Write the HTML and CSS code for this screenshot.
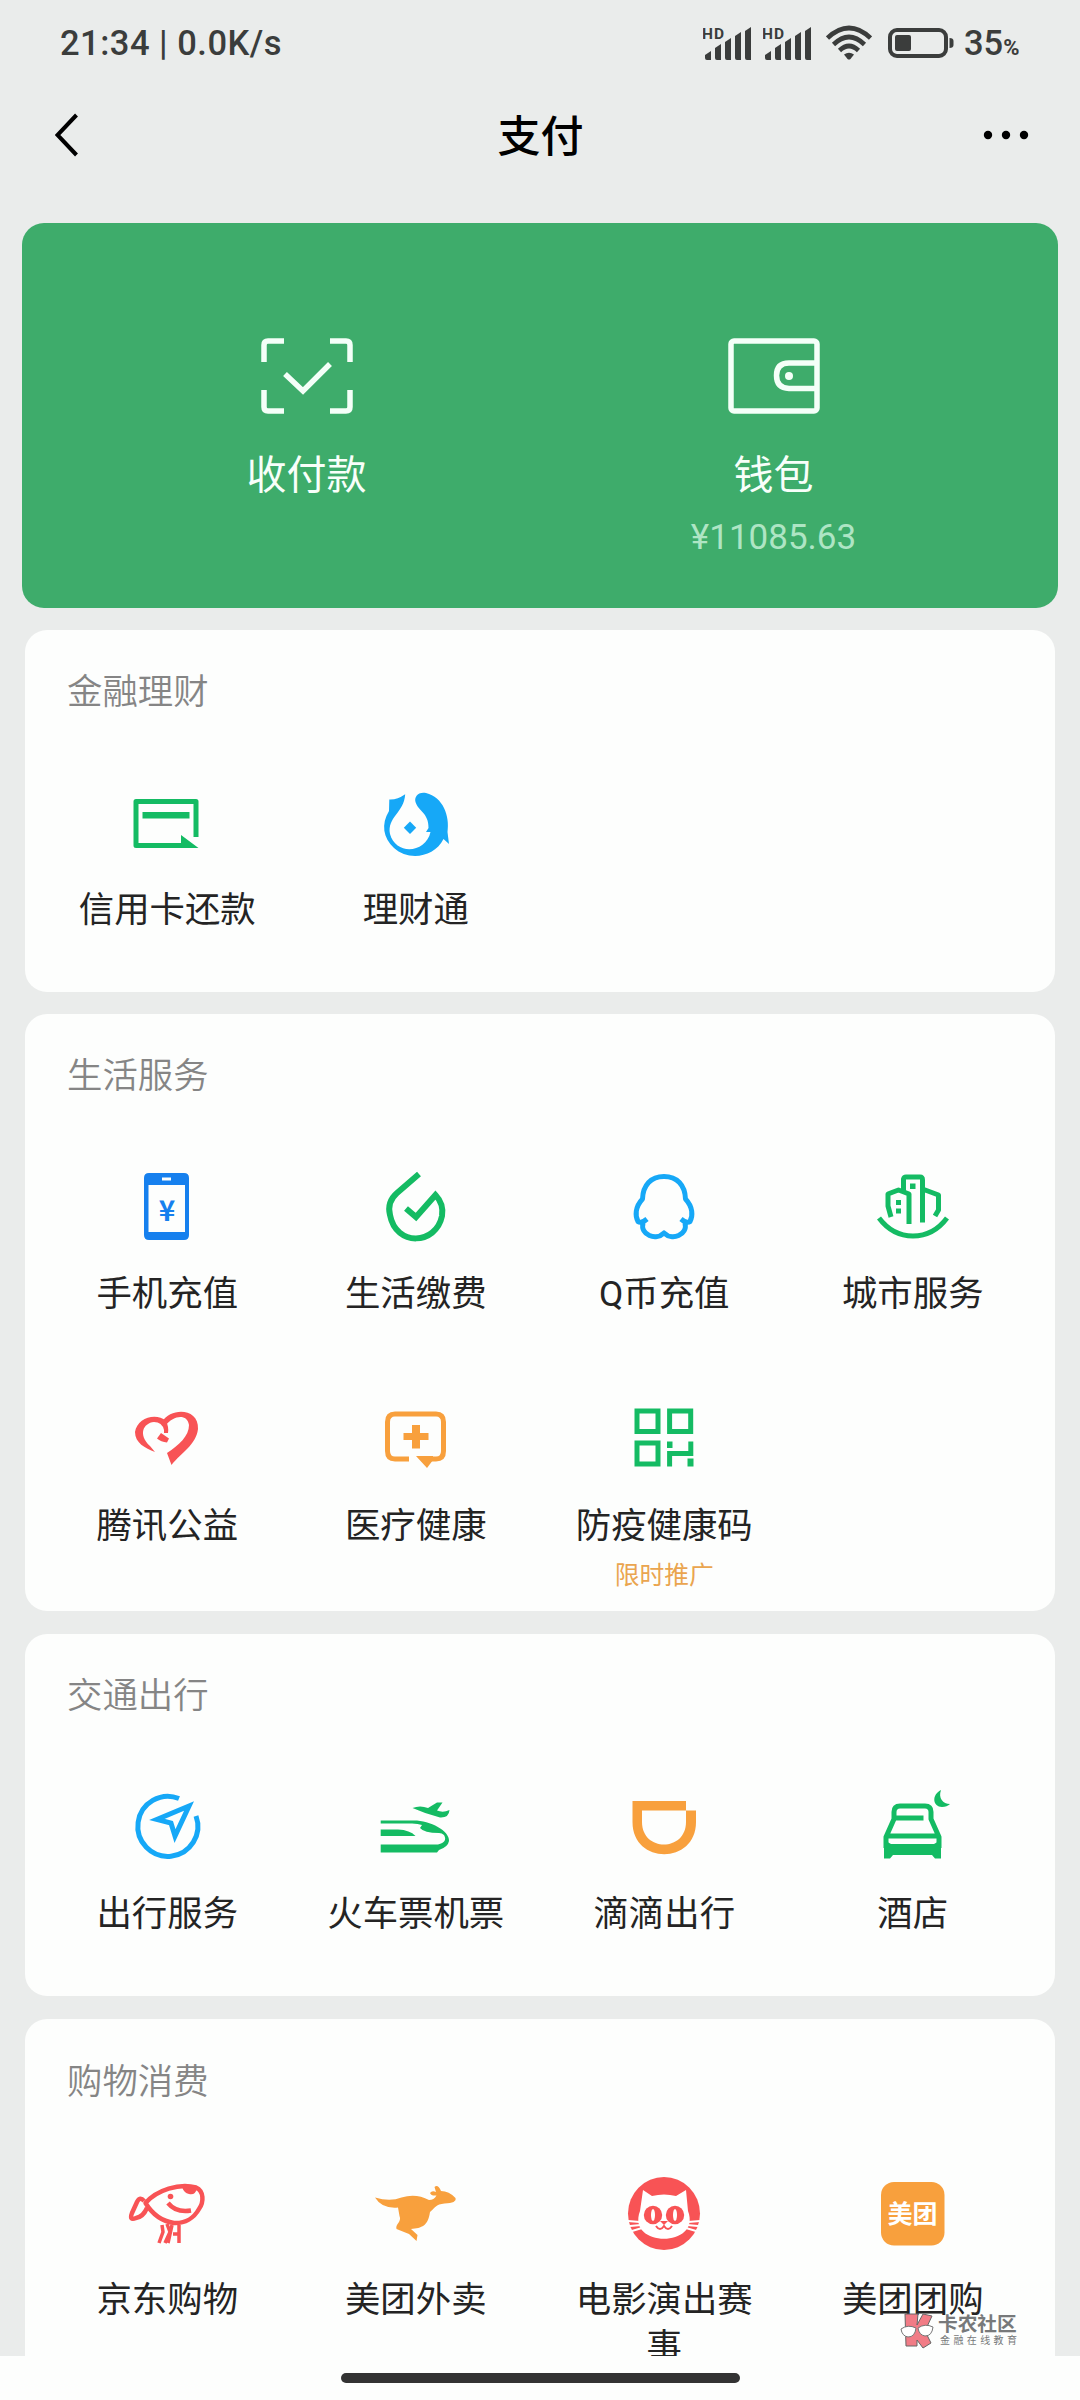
FILE: index.html
```html
<!DOCTYPE html>
<html lang="zh-CN">
<head>
<meta charset="utf-8">
<title>支付</title>
<link rel="stylesheet" href="styles.css">
</head>
<body>
<div class="screen">
  <header class="status">
    <span class="clock">21:34 | 0.0K/s</span>
    <div class="status-right">
      <svg class="signal" width="50" height="36" viewBox="0 0 50 36"><text x="-1" y="13.5" class="hd">HD</text><path d="M2 33v-3l6-4v9H4q-2 0-2-2zM12 23l6-4v16h-4q-2 0-2-2zM22 17l6-4v22h-4q-2 0-2-2zM32 11l6-4v28h-4q-2 0-2-2zM42 6l6-4v33h-4q-2 0-2-2z"/></svg>
      <svg class="signal" width="50" height="36" viewBox="0 0 50 36"><text x="-1" y="13.5" class="hd">HD</text><path d="M2 33v-3l6-4v9H4q-2 0-2-2zM12 23l6-4v16h-4q-2 0-2-2zM22 17l6-4v22h-4q-2 0-2-2zM32 11l6-4v28h-4q-2 0-2-2zM42 6l6-4v33h-4q-2 0-2-2z"/></svg>
      <svg class="wifi" width="46" height="36" viewBox="0 0 46 36"><g fill="none" stroke="#3b3d3c" stroke-width="4.6"><path d="M1.5 13Q23-7 44.500 13"/><path d="M7.500 19.500Q23 4.500 38.500 19.500"/><path d="M13.500 25.500Q23 16.500 32.500 25.500"/></g><path d="M18 29.500Q23 26 28 29.500L24.500 34Q23 35 21.500 34z"/></svg>
      <svg class="battery" width="67" height="30" viewBox="0 0 67 30"><rect x="2" y="2" width="56" height="26" rx="7" fill="none" stroke="#3b3d3c" stroke-width="4"/><rect x="7" y="7" width="16" height="16" rx="2"/><path d="M61.500 10q4 0 4 3v4q0 3-4 3z"/></svg>
      <span class="percent">35<small>%</small></span>
    </div>
  </header>

  <nav class="nav">
    <svg width="24" height="44" viewBox="0 0 24 44"><path d="M21.500 2L2.500 22L21.500 42" fill="none" stroke="#000" stroke-width="4"/></svg>
    <h1>支付</h1>
    <svg width="48" height="12" viewBox="0 0 48 12"><circle cx="6" cy="6" r="4.200"/><circle cx="24" cy="6" r="4.200"/><circle cx="42" cy="6" r="4.200"/></svg>
  </nav>

  <main class="content">
    <section class="wallet">
      <div class="pay">
        <svg width="92" height="76" viewBox="-46 -38 92 76"><g fill="none" stroke="#f4fff8" stroke-width="5.500"><path d="M-43-14V-31Q-43-35-39-35H-23M23-35H39Q43-35 43-31V-14M43 14V31Q43 35 39 35H23M-23 35H-39Q-43 35-43 31V14"/><path d="M-22-2L-4 15L23-12"/></g></svg>
        <span>收付款</span>
      </div>
      <div class="pay">
        <svg width="92" height="76" viewBox="-46 -38 92 76"><g fill="none" stroke="#f4fff8" stroke-width="5.500"><rect x="-43" y="-35" width="86" height="70" rx="3"/><path d="M43-13H15Q2.500-13 2.500-.5T15 12.500H43"/></g><circle cx="15" cy="0" r="4" fill="#f4fff8"/></svg>
        <span>钱包</span>
        <b>¥11085.63</b>
      </div>
    </section>

    <section class="card finance">
      <h2>金融理财</h2>
      <div class="grid">
        <div class="item">
          <svg class="icon green" viewBox="-40 -40 80 80"><path class="line" d="M29 13V-22.500H-31V21.500H16"/><path d="M-24.500-12H22.500V-5.500H-24.500zM14 11L31.500 24H14z"/></svg>
          <span>信用卡还款</span>
        </div>
        <div class="item">
          <svg class="icon sky" viewBox="-40 -40 80 80"><path d="M-10.800-29.700Q-19-24-26.700-24.500L-27-13C-35 0-33 14-22 24C-8 37 18 34 27.500 15L33 20L31.500 8C34-8 27-27 10-31C2-32.500-2-27-.5-22C2-13 13-11 12.500 4L10 8H14.500C10 29-20 32-26 10C-29-7-12-11-10.800-29.700z"/><path d="M-6-2.500L.2 3.700L-6 10L-12.200 3.700z"/></svg>
          <span>理财通</span>
        </div>
      </div>
    </section>

    <section class="card life">
      <h2>生活服务</h2>
      <div class="grid">
        <div class="item">
          <svg class="icon blue" viewBox="-40 -40 80 80"><path fill-rule="evenodd" d="M-18-35H17Q22-35 22-30V27Q22 32 17 32H-18Q-23 32-23 27V-30Q-23-35-18-35zM-18.500-23V24H18V-23zM-5-30.500V-27.500H4V-30.500z"/><text x="0" y="12.500" class="yen">¥</text></svg>
          <span>手机充值</span>
        </div>
        <div class="item">
          <svg class="icon green" viewBox="-40 -40 80 80"><path class="line thick" d="M3-34L-19-15C-27-8-28-1-26 7C-20 39 20 37 26 8Q28-4 19.500-13L0 9L-10 .5"/></svg>
          <span>生活缴费</span>
        </div>
        <div class="item">
          <svg class="icon sky" viewBox="-40 -40 80 80"><path class="line" d="M0-31.500C-13-31.500-21-23-21.500-9C-29-1-29 8-26 13.500Q-23 16-17 11M17 11Q23 16 26 13.500C29 8 29-1 21.500-9C21-23 13-31.500 0-31.500M-21 15C-24 27-8 33 0 25C8 33 24 27 21 15"/></svg>
          <span>Q币充值</span>
        </div>
        <div class="item">
          <svg class="icon green" viewBox="-40 -40 80 80"><path class="line" d="M-22 9L-25-2V-14Q-20-16-14.500-18Q-9-16-4-14V16M-9.500-17V-29Q-9-31-7-31H7Q9.500-31 9.500-28V14.500M9.500-19L25.500-13V2L22 8M-34 10C-16 34 16 34 34 10"/><path d="M-3-24.500H2.500V-19H-3zM-17-8H-12V-3H-17zM-17 .5H-12V5.500H-17z"/></svg>
          <span>城市服务</span>
        </div>
        <div class="item">
          <svg class="icon red" viewBox="-40 -40 80 80"><path d="M-5-18C4-33 32-32 31-11C29 5 14 13 4.500 25L0 13C12 5 22-4 22-15C20-27 6-24-1-15z"/><path d="M-1-19C-11-28-30-22-32-8C-32 3-22 8-12 12L-17 6C-29-5-24-17-13-18Q-5-18-3-10V-7H1Q2-13-1-19z"/><path d="M-6-7L2-1.500L0 2.500Q-6 2-10-1.500z"/></svg>
          <span>腾讯公益</span>
        </div>
        <div class="item">
          <svg class="icon orange" viewBox="-40 -40 80 80"><path class="line" d="M-7 19H-21Q-28.500 19-28.500 11V-18Q-28.500-26-21-26H20Q27.500-26 27.500-18V11Q27.500 19 20 19H13"/><path d="M0 16H17V20L11 28zM-12.500-7H-4V-15H4V-7H12.500V0H4V8.500H-4V0H-12.500z"/></svg>
          <span>医疗健康</span>
        </div>
        <div class="item">
          <svg class="icon green" viewBox="-40 -40 80 80"><path class="line square" d="M-27-29H-6V-8.500H-27zM5.600-29H26.700V-8.500H5.600zM-27 3H-6V24H-27zM26.800 1.500V13.500H5.600V26.500"/><path d="M3 1.500H8.500V8H3zM23.500 18.500H29.500V26.500H23.500z"/></svg>
          <span>防疫健康码</span>
          <em>限时推广</em>
        </div>
      </div>
    </section>

    <section class="card">
      <h2>交通出行</h2>
      <div class="grid">
        <div class="item">
          <svg class="icon sky" viewBox="-40 -40 80 80"><path class="line" d="M12-29.500A30 30 0 1 0 29-12"/><path class="line sharp" d="M22-22L-10-8.500L4-5L8 8z"/></svg>
          <span>出行服务</span>
        </div>
        <div class="item">
          <svg class="icon green" viewBox="-40 -40 80 80"><path d="M-35.300-7.500H-2C14-7.500 34 3 33 13Q32 19 23 22L21 24.500H-35.300V16.500H22Q32 14 28 7Q26 5 23 5Q8 5 4 0L6-3Q2-4.500-4-4.500H-35.300z"/><path d="M-35.300 1.500H-18Q-6 2-.5 8H-35.300z"/><path d="M-3.500-20Q4-23 12-20L21-25.500H26.500L21-17.500Q27-15 33.500-18Q33-10 24-10.500Q10-14-3.500-20z"/></svg>
          <span>火车票机票</span>
        </div>
        <div class="item">
          <svg class="icon orange" viewBox="-40 -40 80 80"><path fill-rule="evenodd" d="M-31.500-27H22V-17.500H32V-6C32 37-31.500 37-31.500-6zM-22-17.500V-6C-22 24 22 24 22-6V-17.500z"/></svg>
          <span>滴滴出行</span>
        </div>
        <div class="item">
          <svg class="icon green" viewBox="-40 -40 80 80"><path class="line" d="M-27 20V9L-19-9V-16Q-19-22-13-22H12Q18-22 18-16V-9L26 9V20M-17-10H10.500M-25 8H24"/><path d="M-29 12L-22 16H21L28 12V30.500H22L19 27H-20L-23 30.500H-29zM28-38C18-33 20-21 29-21Q34-21 37-24C30-24 25-30 28-38z"/></svg>
          <span>酒店</span>
        </div>
      </div>
    </section>

    <section class="card last">
      <h2>购物消费</h2>
      <div class="grid">
        <div class="item">
          <svg class="icon red" viewBox="-40 -40 80 80"><path class="line snout" d="M-21.500-11C-10-24 12-31 29-26.500C37-23 37-12 32-5C27 4 18 9.500 7 9C-7 7-16-2-21.500-11zM-23-13Q-27-18-30-12L-35-1Q-38 7-31 4Q-24 3-20-6M1-11Q9-1 24-3.500"/><path d="M15-27L31-27Q28-18 22-20Q17-21 15-27z"/><circle cx="3.500" cy="-17.500" r="2.800"/><path class="line thin" d="M-5 11L-4 18L-8 29M0 10L3 18L-2 29M5 11L1 29M12 11V29M6 20H12"/></svg>
          <span>京东购物</span>
        </div>
        <div class="item">
          <svg class="icon wide orange" viewBox="-44 -40 88 80"><path d="M-41-16.500Q-26-12-14.500-16.500Q0-21 13-14Q18-14 20.500-18.500Q15-18 14-21Q16-24 20-22L18.500-27Q22-30 25-23Q33-23 39.500-16Q41-11 28.500-10.500C20-10 18-5 14-2C12 12 6 14-5 15L1.500 21L.5 27L-7 20L-19.500 15C-21 10-14 8-16.500 2L-18-6.500Q-34-5-41-16.500z"/></svg>
          <span>美团外卖</span>
        </div>
        <div class="item">
          <svg class="icon red" viewBox="-40 -40 80 80"><ellipse cx="0" cy="-.5" rx="36" ry="36.500"/><path d="M-21-24L-12-18Q0-21 12-18L22-24L24-3C38 34-38 34-24-3z" fill="#fff"/><path d="M-36 7L-24 8M-34 12L-23 11M-32 17L-22 14M36 7L24 8M34 12L23 11M32 17L22 14" stroke="#fff" stroke-width="2"/><circle cx="-11" cy="1" r="9.200"/><circle cx="11" cy="1" r="9.200"/><path d="M-4 7H4L0 11z"/><path d="M-8 12Q-4 18 0 12Q4 18 8 12" fill="none" stroke="#f85355" stroke-width="2"/><ellipse cx="-11" cy="1" rx="2" ry="6" fill="#fff"/><ellipse cx="11" cy="1" rx="2" ry="6" fill="#fff"/></svg>
          <span>电影演出赛事</span>
        </div>
        <div class="item">
          <svg class="icon orange" viewBox="-40 -40 80 80"><rect x="-32" y="-32" width="63.500" height="63.500" rx="13"/><text x="-.5" y="9" class="brand">美团</text></svg>
          <span>美团团购</span>
        </div>
      </div>
    </section>
  </main>

  <footer class="home"><i></i></footer>

  <div class="mark">
    <svg width="34" height="38" viewBox="0 0 34 38"><path d="M5 2H18L17 13L23 2L32 4L25 19L31 31L23 36L17 28V34H6z" fill="#f17c86" stroke="#666" stroke-width="1"/><path d="M1 17Q8 12 16 16Q15 25 8 25Q2 24 1 17zM18 16Q25 11 33 15Q32 24 25 24Q19 23 18 16z" fill="#fff" stroke="#777" stroke-width="1"/></svg>
    <div><strong>卡农社区</strong><span>金融在线教育</span></div>
  </div>
</div>
</body>
</html>
```
FILE: styles.css
```css
* { box-sizing: border-box; margin: 0; padding: 0; }
body { background: #fdfefd; font-family: "Noto Sans CJK SC", sans-serif; }
svg { display: block; flex: none; }
.screen { position: relative; width: 1080px; height: 2400px; overflow: hidden; display: flex; flex-direction: column; background: #eaeceb; }

.status { height: 86px; padding: 0 60px; display: flex; justify-content: space-between; align-items: center; font-family: Roboto, "Noto Sans", sans-serif; font-weight: 500; color: #3b3d3c; fill: #3b3d3c; }
.clock { font-size: 34.500px; letter-spacing: .5px; }
.status-right { display: flex; align-items: center; }
.signal { margin-right: 10px; }
.wifi { margin-left: 3px; }
.battery { margin-left: 16px; }
.hd { font: 700 15.500px Roboto, sans-serif; letter-spacing: 1px; }
.percent { width: 56px; margin-left: 9px; font-size: 34.500px; white-space: nowrap; }
.percent small { font-size: 22px; font-weight: 700; }

.nav { height: 98px; padding: 0 50px 0 55px; display: flex; align-items: center; justify-content: space-between; }
.nav h1 { font-size: 43px; font-weight: 500; line-height: 60px; margin: -4px 0 0 20px; }

.content { height: 2172px; padding: 39px 22px 0; flex: none; overflow: hidden; }
.wallet { height: 385px; padding: 115px 51px 0; border-radius: 22px; background: #3eac6b; display: grid; grid-template-columns: 1fr 1fr; color: #f8fffa; }
.pay { display: flex; flex-direction: column; align-items: center; }
.pay span { margin-top: 28px; font-size: 40px; line-height: 60px; }
.pay b { margin-top: 11px; font: 400 35px/50px Roboto, sans-serif; color: #aee5c4; }

.card { margin: 23px 3px 0; padding: 35px 18px 0; min-height: 362px; border-radius: 22px; background: #fdfefd; }
.finance, .life { margin-top: 22px; }
.life { height: 597px; }
.card h2 { height: 47px; margin-bottom: 48px; padding-left: 24px; font-size: 35.400px; font-weight: 350; line-height: 47px; color: #858585; }
.grid { display: grid; grid-template-columns: repeat(4, 1fr); grid-auto-rows: 232px; }
.item { padding: 24px 33px 0; display: flex; flex-direction: column; align-items: center; text-align: center; font-family: Roboto, "Noto Sans CJK SC", sans-serif; font-size: 35.400px; line-height: 47px; color: #242424; font-weight: 400; }
.item span { margin-top: 23px; width: 182px; }
.item em { margin-top: 9px; font-size: 24.800px; line-height: 34px; font-style: normal; color: #eaa54f; }
.last { border-radius: 22px 22px 0 0; height: 500px; padding-top: 36px; }

.icon { width: 80px; height: 80px; }
.wide { width: 88px; }
.green { color: #14bb63; }
.sky { color: #16a8f7; }
.blue { color: #1680ee; }
.red { color: #f85355; }
.orange { color: #f8a03d; }
.icon { fill: currentColor; }
.line { fill: none; stroke: currentColor; stroke-width: 5; stroke-linejoin: round; }
.thick { stroke-width: 6; stroke-linejoin: miter; }
.sharp, .square { stroke-linejoin: miter; }
.snout { stroke-width: 4.500; }
.thin { stroke-width: 3.500; }
.yen { font: 700 28px "Noto Sans CJK SC", sans-serif; text-anchor: middle; }
.brand { font: 700 25px "Noto Sans CJK SC", sans-serif; text-anchor: middle; fill: #fff; }

.home { flex: 1; background: #fdfefd; display: flex; justify-content: center; padding-top: 17px; }
.home i { width: 399px; height: 10px; border-radius: 5px; background: #333; }

.mark { position: absolute; left: 900px; top: 2312px; display: flex; gap: 4px; color: #77797a; }
.mark div { display: flex; flex-direction: column; }
.mark strong { font-size: 19.700px; line-height: 22px; font-weight: 700; white-space: nowrap; }
.mark span { padding-left: 2px; font-size: 10px; line-height: 11px; letter-spacing: 3.400px; white-space: nowrap; }
```
